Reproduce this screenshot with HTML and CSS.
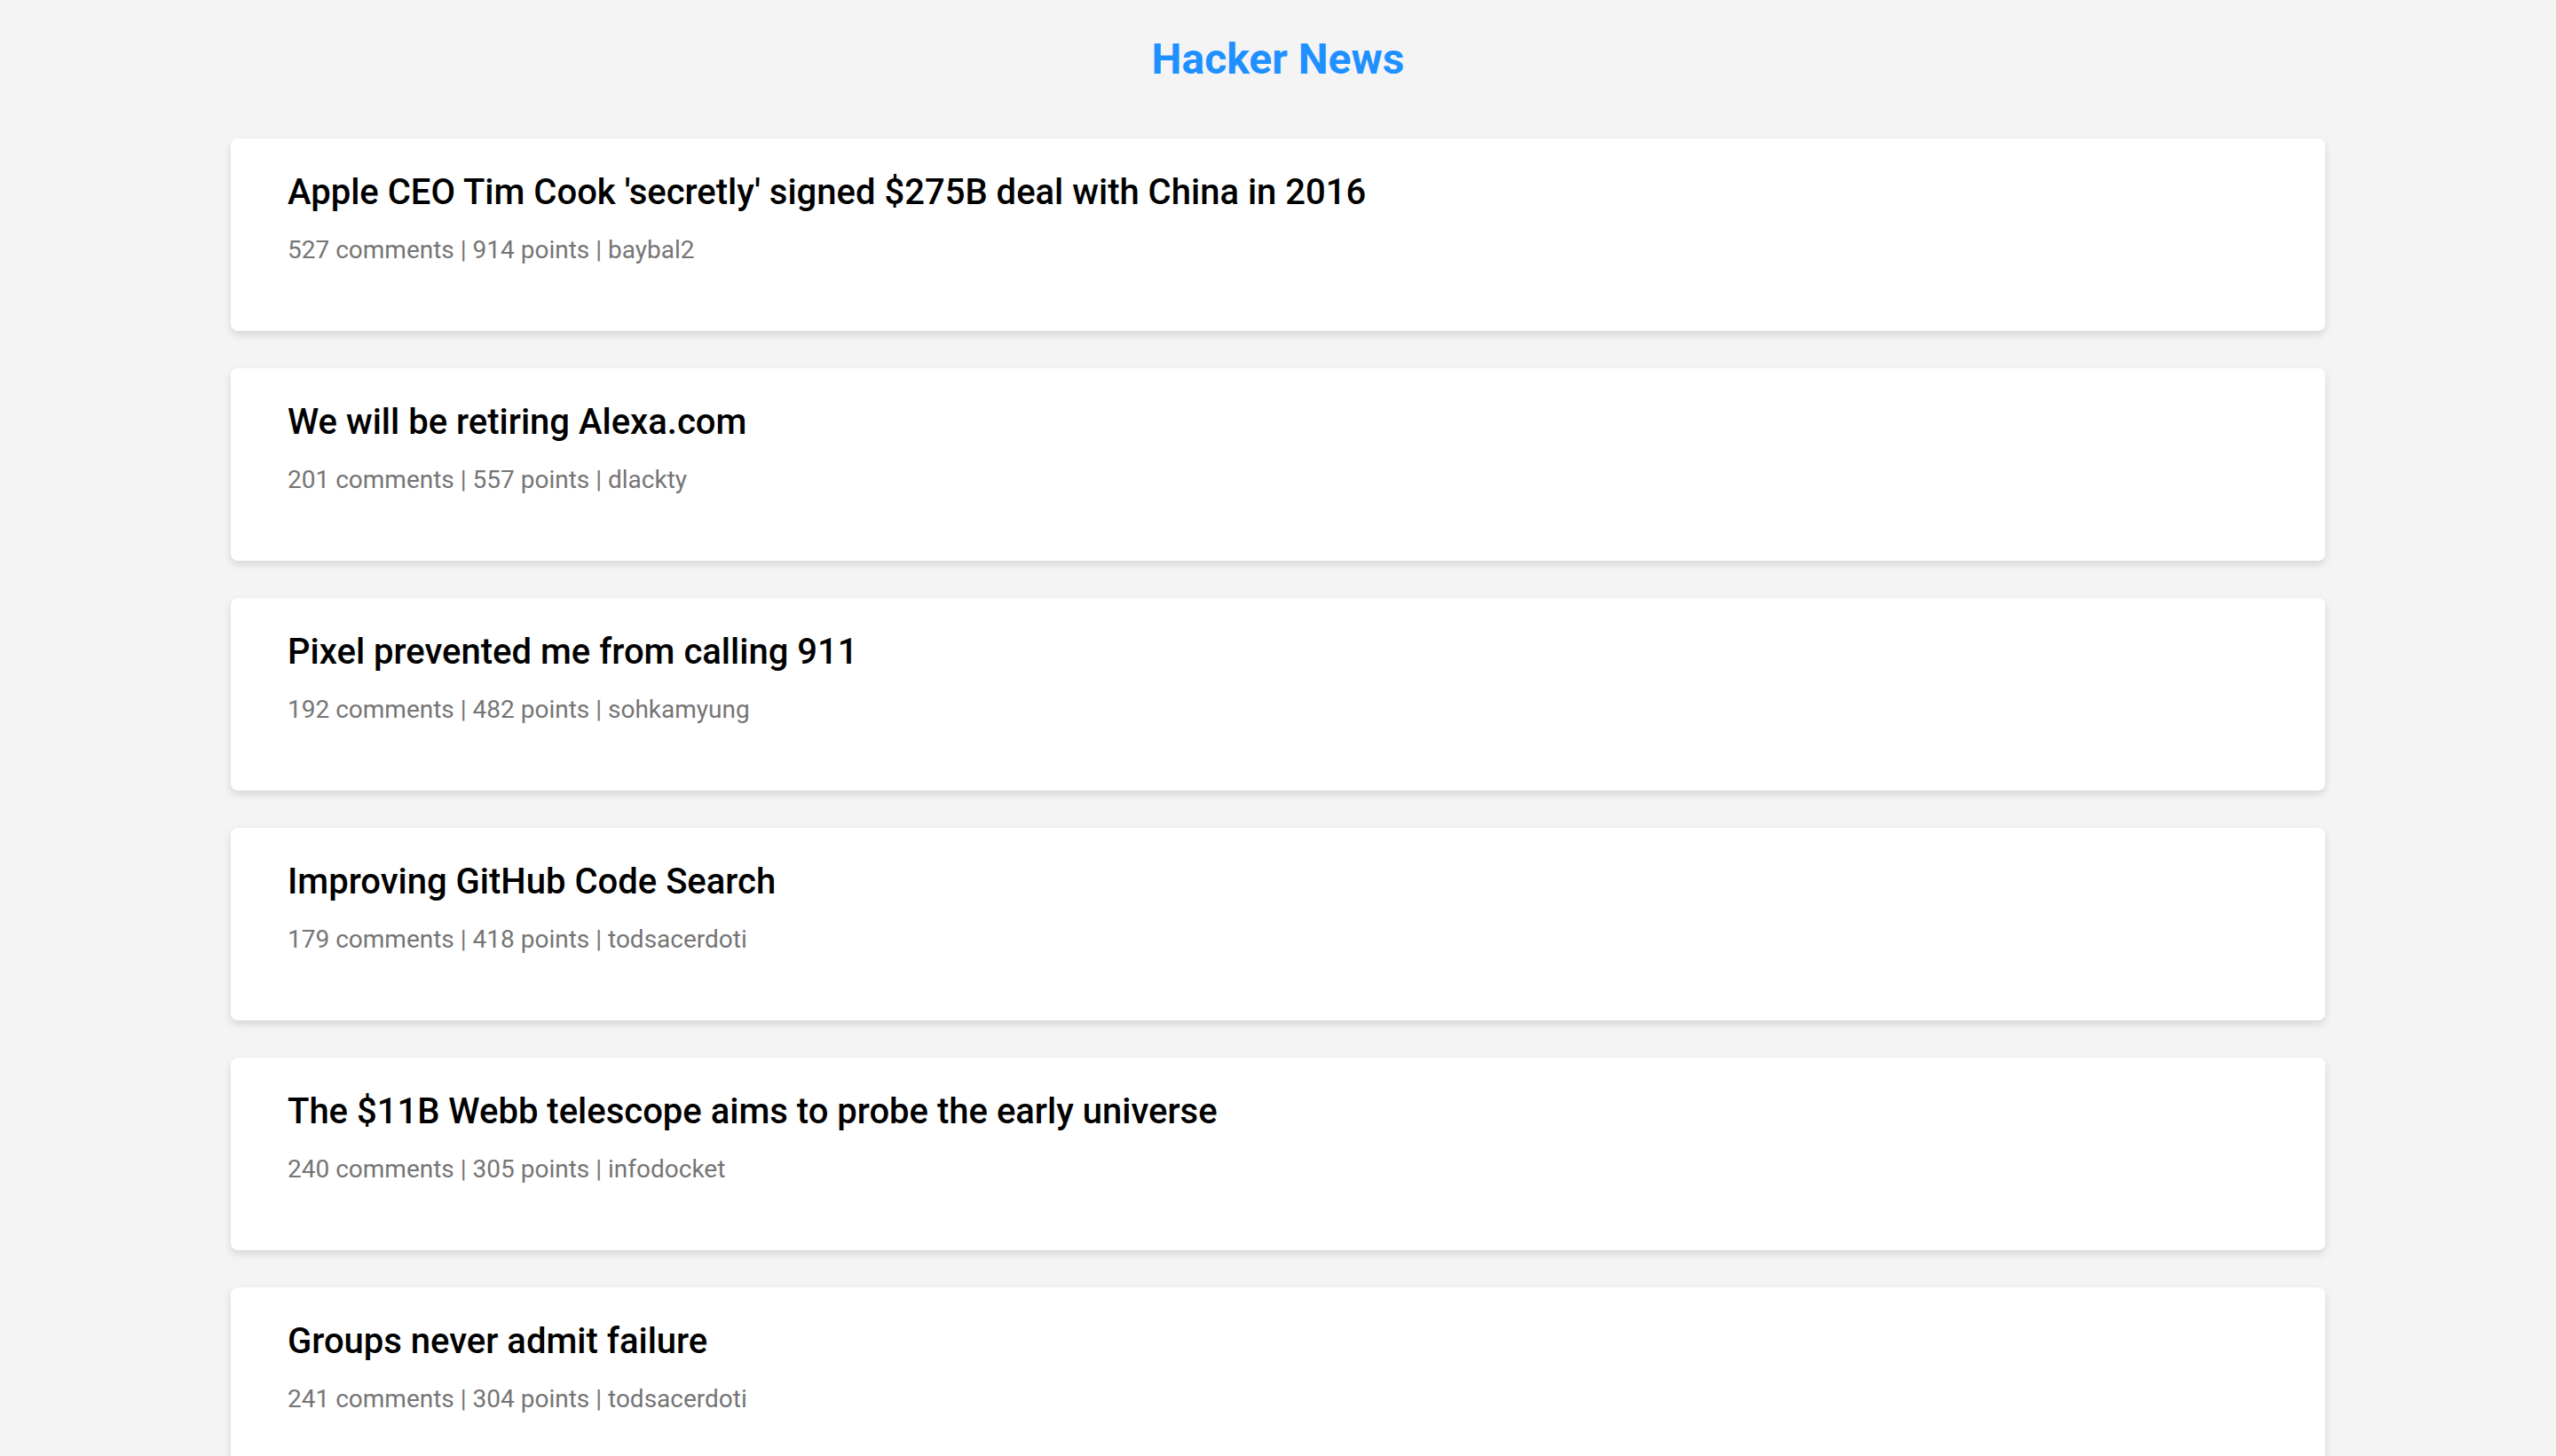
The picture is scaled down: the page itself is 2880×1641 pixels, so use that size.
FILE: index.html
```html
<!DOCTYPE html>
<html lang="en">
<head>
<meta charset="utf-8">
<title>Hacker News</title>
<link rel="stylesheet" href="styles.css">
</head>
<body>
<header class="site-header">
  <h1 class="site-title">Hacker News</h1>
</header>
<main class="story-list">
  <article class="story">
    <h2 class="story-title">Apple CEO Tim Cook 'secretly' signed $275B deal with China in 2016</h2>
    <p class="story-meta">527 comments | 914 points | baybal2</p>
  </article>
  <article class="story">
    <h2 class="story-title">We will be retiring Alexa.com</h2>
    <p class="story-meta">201 comments | 557 points | dlackty</p>
  </article>
  <article class="story">
    <h2 class="story-title">Pixel prevented me from calling 911</h2>
    <p class="story-meta">192 comments | 482 points | sohkamyung</p>
  </article>
  <article class="story">
    <h2 class="story-title">Improving GitHub Code Search</h2>
    <p class="story-meta">179 comments | 418 points | todsacerdoti</p>
  </article>
  <article class="story">
    <h2 class="story-title">The $11B Webb telescope aims to probe the early universe</h2>
    <p class="story-meta">240 comments | 305 points | infodocket</p>
  </article>
  <article class="story">
    <h2 class="story-title">Groups never admit failure</h2>
    <p class="story-meta">241 comments | 304 points | todsacerdoti</p>
  </article>
</main>
</body>
</html>
```

FILE: styles.css
```css
html, body {
  margin: 0;
  padding: 0;
}
body {
  background: #f4f4f4;
  font-family: Roboto, "Liberation Sans", Arial, sans-serif;
  color: #000;
}
.site-header {
  padding-top: 38px;
  text-align: center;
}
.site-title {
  margin: 0;
  font-size: 48px;
  font-weight: 700;
  color: #1e90ff;
  line-height: normal;
}
.story-list {
  width: 2360px;
  margin: 61px auto 40px;
  display: flex;
  flex-direction: column;
  gap: 42px;
}
.story {
  background: #fff;
  border-radius: 8px;
  box-shadow: 0 4px 10px rgba(0, 0, 0, 0.13);
  padding: 37px 64px 38px;
}
.story-title {
  margin: 0;
  font-size: 40px;
  font-weight: 500;
  line-height: normal;
  color: #000;
}
.story-meta {
  margin: 25px 0 37px;
  font-size: 28px;
  line-height: normal;
  color: #757575;
}
```
